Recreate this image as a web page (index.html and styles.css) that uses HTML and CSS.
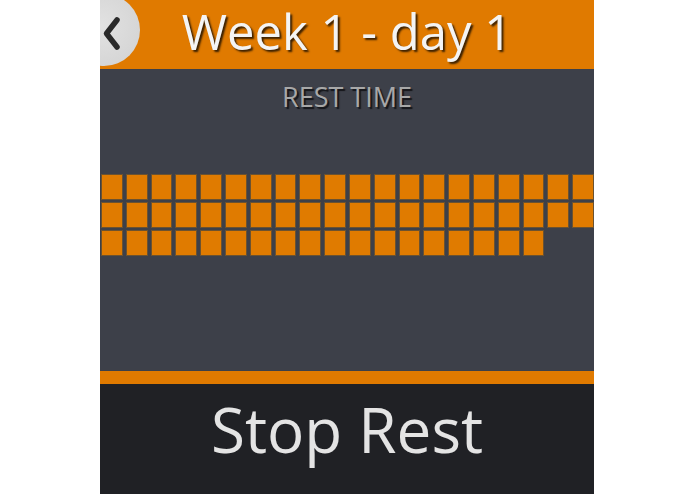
FILE: index.html
```html
<!DOCTYPE html>
<html lang="en">
<head>
    <meta charset="UTF-8">
    <title>Week 1 - day 1</title>

    <link rel="stylesheet" href="styles.css">
</head>
<body>
<div class="screen">
    <div class="header">
        <div class="back">
            <svg width="72" height="72" viewBox="0 0 72 72">
                <polyline points="49,26 38.5,39.5 49,53" fill="none" stroke="#2a2a2a" stroke-width="5.5" stroke-linecap="round" stroke-linejoin="round"/>
            </svg>
        </div>
        <h1 class="title">Week 1 - day 1</h1>
    </div>

    <div class="content">
        <div class="label">REST TIME</div>
        <div class="blocks">
            <div class="block"></div><div class="block"></div><div class="block"></div><div class="block"></div><div class="block"></div>
            <div class="block"></div><div class="block"></div><div class="block"></div><div class="block"></div><div class="block"></div>
            <div class="block"></div><div class="block"></div><div class="block"></div><div class="block"></div><div class="block"></div>
            <div class="block"></div><div class="block"></div><div class="block"></div><div class="block"></div><div class="block"></div>

            <div class="block"></div><div class="block"></div><div class="block"></div><div class="block"></div><div class="block"></div>
            <div class="block"></div><div class="block"></div><div class="block"></div><div class="block"></div><div class="block"></div>
            <div class="block"></div><div class="block"></div><div class="block"></div><div class="block"></div><div class="block"></div>
            <div class="block"></div><div class="block"></div><div class="block"></div><div class="block"></div><div class="block"></div>

            <div class="block"></div><div class="block"></div><div class="block"></div><div class="block"></div><div class="block"></div>
            <div class="block"></div><div class="block"></div><div class="block"></div><div class="block"></div><div class="block"></div>
            <div class="block"></div><div class="block"></div><div class="block"></div><div class="block"></div><div class="block"></div>
            <div class="block"></div><div class="block"></div><div class="block"></div>
        </div>
    </div>

    <div class="strip"></div>

    <div class="footer">
        <div class="stop">Stop Rest</div>
    </div>
</div>
</body>
</html>
```

FILE: styles.css
```css
* {
    margin: 0;
    padding: 0;
    box-sizing: border-box;
}

body {
    background-color: #ffffff;
    font-family: "Open Sans", "Noto Sans", sans-serif;
}

.screen {
    width: 494px;
    height: 494px;
    margin-left: 100px;
    display: flex;
    flex-direction: column;
    overflow: hidden;
}

.header {
    position: relative;
    height: 69px;
    background-color: #e07a00;
    text-align: center;
}

.back {
    position: absolute;
    top: -6px;
    left: -32px;
    width: 72px;
    height: 72px;
    border-radius: 50%;
    background: radial-gradient(circle at 45% 45%, #e2e2e2 0%, #d6d6d6 70%, #c9c9c9 100%);
}

.back svg {
    display: block;
}

.title {
    font-size: 49px;
    font-weight: normal;
    line-height: 62px;
    color: #f4f4f4;
    text-shadow: 2px 2px 2px rgba(0, 0, 0, 0.75);
}

.content {
    height: 302px;
    padding-top: 14px;
    background-color: #3d4049;
}

.label {
    font-size: 27px;
    line-height: 27px;
    text-align: center;
    color: #a8a8a8;
    text-shadow: 2px 2px 1px #15161a;
}

.blocks {
    margin-top: 64px;
    padding-left: 1px;
    display: grid;
    grid-template-columns: repeat(20, 1fr);
    grid-auto-rows: 26px;
    column-gap: 3px;
    row-gap: 2px;
}

.block {
    background-color: #e07b00;
    border: 1px solid #6b5230;
}

.strip {
    height: 13px;
    background-color: #e07a00;
}

.footer {
    flex: 1;
    padding-top: 14px;
    background-color: #202125;
    text-align: center;
}

.stop {
    font-size: 62px;
    line-height: 62px;
    color: #e4e4e4;
}
```
